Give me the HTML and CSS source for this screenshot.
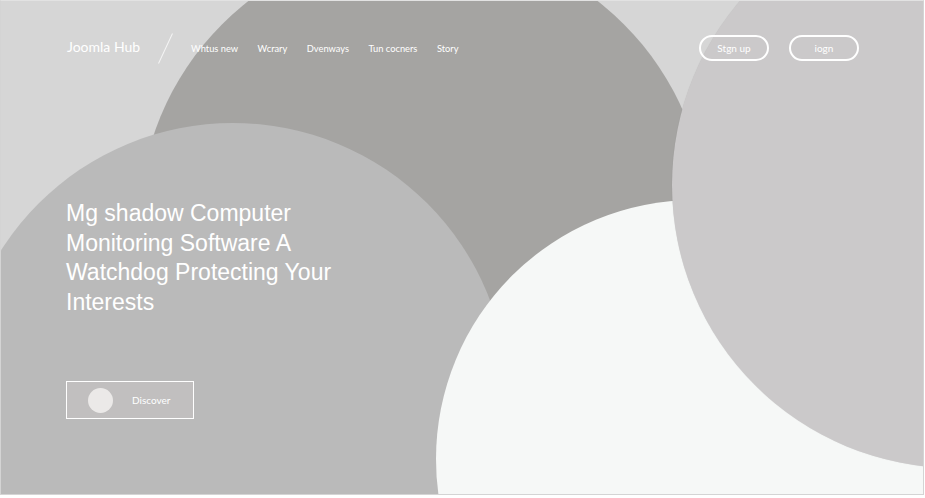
FILE: index.html
```html
<!DOCTYPE html>
<html lang="en">
<head>
<meta charset="utf-8">
<title>Joomla Hub</title>
<link rel="stylesheet" href="styles.css">
</head>
<body>
<div class="frame">
  <div class="blob blob-a"></div>
  <div class="blob blob-b"></div>
  <div class="blob blob-c"></div>
  <div class="blob blob-d"></div>

  <header class="topbar">
    <div class="brand">
      <span class="logo">Joomla Hub</span>
      <span class="slash"></span>
      <nav class="nav">
        <a href="#">Whtus new</a>
        <a href="#">Wcrary</a>
        <a href="#">Dvenways</a>
        <a href="#">Tun cocners</a>
        <a href="#">Story</a>
      </nav>
    </div>
    <div class="auth">
      <a class="pill" href="#">Stgn up</a>
      <a class="pill" href="#">iogn</a>
    </div>
  </header>

  <section class="hero">
    <h1 class="title">Mg shadow Computer Monitoring Software A Watchdog Protecting Your Interests</h1>
    <a class="discover" href="#"><span class="dot"></span><span>Discover</span></a>
  </section>
</div>
</body>
</html>
```

FILE: styles.css
```css
html, body {
  margin: 0;
  padding: 0;
  background: #ffffff;
}

.frame {
  position: relative;
  width: 922px;
  height: 493px;
  border: 1px solid #d4d4d4;
  border-top-color: #e2e2e2;
  background: #d6d6d6;
  overflow: hidden;
  font-family: Lato, "Open Sans", sans-serif;
  color: #ffffff;
}

.blob {
  position: absolute;
  border-radius: 50%;
}

.blob-a {
  left: 138px;
  top: -60px;
  width: 568px;
  height: 568px;
  background: #a5a4a2;
}

.blob-b {
  left: -43px;
  top: 122px;
  width: 550px;
  height: 550px;
  background: #bababa;
}

.blob-c {
  left: 435px;
  top: 199px;
  width: 518px;
  height: 518px;
  background: #f6f8f7;
}

.blob-d {
  left: 671px;
  top: -99px;
  width: 566px;
  height: 566px;
  background: #cbc9ca;
  box-shadow: 0 0 1px rgba(0, 0, 0, 0.12);
}

.topbar {
  position: relative;
  display: flex;
  justify-content: space-between;
  align-items: center;
  padding: 34px 64px 0 66px;
  height: 26px;
}

.brand {
  display: flex;
  align-items: center;
}

.logo {
  font-size: 14px;
  line-height: 24px;
  margin-top: -2px;
  color: #ffffff;
}

.slash {
  width: 1px;
  height: 33px;
  margin: 0 25px 0 25px;
  background: rgba(255, 255, 255, 0.75);
  transform: rotate(25deg);
}

.nav {
  display: flex;
  gap: 19.5px;
}

.nav a {
  color: #ffffff;
  text-decoration: none;
  font-size: 9.3px;
}

.auth {
  display: flex;
  gap: 20px;
}

.pill {
  box-sizing: border-box;
  width: 70px;
  height: 26px;
  border: 2px solid #ffffff;
  border-radius: 13px;
  display: flex;
  align-items: center;
  justify-content: center;
  color: #ffffff;
  text-decoration: none;
  font-size: 10px;
}

.hero {
  position: relative;
  padding: 0 0 0 65px;
}

.title {
  margin: 138px 0 0 0;
  width: 295px;
  font-family: "Liberation Sans", Arial, sans-serif;
  font-weight: 400;
  font-size: 23px;
  line-height: 29.6px;
  color: #ffffff;
}

.discover {
  box-sizing: border-box;
  margin-top: 64px;
  width: 128px;
  height: 38px;
  border: 1.5px solid #ffffff;
  background: #c1bfbf;
  display: flex;
  align-items: center;
  padding-left: 21px;
  gap: 19px;
  color: #ffffff;
  text-decoration: none;
  font-size: 10px;
}

.dot {
  width: 25px;
  height: 25px;
  border-radius: 50%;
  background: #ebe9e8;
}
```
